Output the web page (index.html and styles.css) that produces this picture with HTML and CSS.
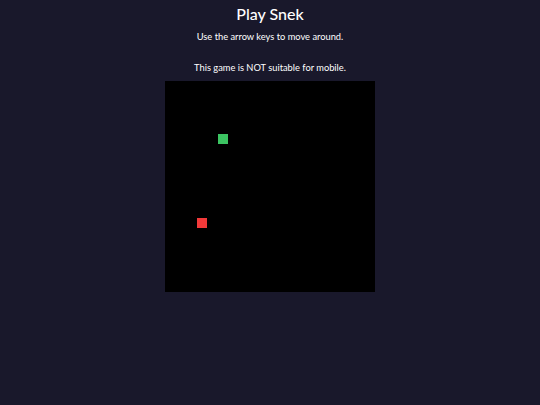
FILE: index.html
```html
<!DOCTYPE html>
<html>
<head>
<meta charset="utf-8">
<link rel="stylesheet" href="styles.css">
</head>
<body>
<main class="page">
  <h1 class="title">Play Snek</h1>
  <p class="hint">Use the arrow keys to move around.</p>
  <p class="hint warn">This game is NOT suitable for mobile.</p>
  <div class="board">
    <div class="cell food" style="left:52.5px;top:52.5px"></div>
    <div class="cell snake" style="left:31.5px;top:136.5px"></div>
  </div>
</main>
</body>
</html>
```
FILE: styles.css
```css
html, body {
  margin: 0;
  padding: 0;
  background: #19182b;
  height: 100%;
}
.page {
  display: flex;
  flex-direction: column;
  align-items: center;
  font-family: "Lato", "Open Sans", sans-serif;
  color: #ffffff;
}
.title {
  margin: 4px 0 0;
  font-size: 16px;
  font-weight: 500;
  line-height: 20px;
}
.hint {
  margin: 7px 0 0;
  font-size: 9.3px;
  line-height: 12px;
}
.warn {
  margin-top: 19px;
}
.board {
  position: relative;
  margin-top: 7px;
  width: 210px;
  height: 211px;
  background: #000000;
}
.cell {
  position: absolute;
  width: 10.5px;
  height: 10.5px;
}
.food { background: #3cc462; }
.snake { background: #f23a3a; }
```
